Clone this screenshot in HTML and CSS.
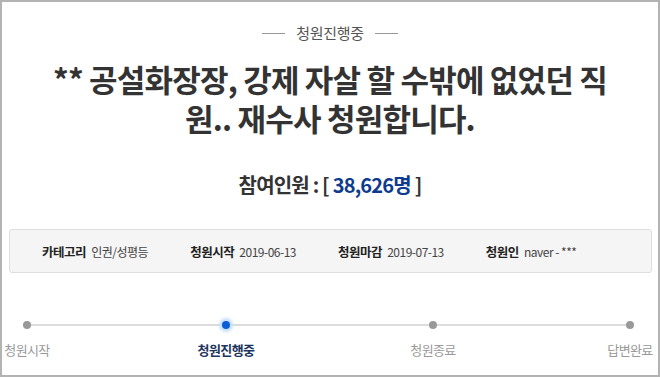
FILE: index.html
```html
<!DOCTYPE html>
<html>
<head>
  <title>청원진행중</title>
  <link rel="stylesheet" href="styles.css">
</head>
<body>
  <div class="frame">
    <div class="status">청원진행중</div>

    <h1 class="title">** 공설화장장, 강제 자살 할 수밖에 없었던 직원.. 재수사 청원합니다.</h1>

    <div class="count">참여인원 : [ <span class="count-num">38,626명</span> ]</div>

    <ul class="info">
      <li><strong>카테고리</strong> <span>인권/성평등</span></li>
      <li><strong>청원시작</strong> <span>2019-06-13</span></li>
      <li><strong>청원마감</strong> <span>2019-07-13</span></li>
      <li><strong>청원인</strong> <span>naver - ***</span></li>
    </ul>

    <div class="steps">
      <div class="step">
        <span class="dot"></span>
        <span class="step-label">청원시작</span>
      </div>
      <div class="step active">
        <span class="dot"></span>
        <span class="step-label">청원진행중</span>
      </div>
      <div class="step">
        <span class="dot"></span>
        <span class="step-label">청원종료</span>
      </div>
      <div class="step">
        <span class="dot"></span>
        <span class="step-label">답변완료</span>
      </div>
    </div>
  </div>
</body>
</html>
```

FILE: styles.css
```css
body {
  margin: 0;
  background: #fff;
  font-family: "Noto Sans CJK KR", "Noto Sans", sans-serif;
  color: #333;
}

.frame {
  width: 660px;
  height: 377px;
  box-sizing: border-box;
  border: 2px solid #b3b3b3;
  overflow: hidden;
}

/* top status with lines on both sides */
.status {
  display: flex;
  justify-content: center;
  align-items: center;
  gap: 11px;
  margin-top: 21px;
  font-size: 15px;
  line-height: 20px;
  color: #555;
  letter-spacing: -0.3px;
}

.status::before,
.status::after {
  content: "";
  width: 23px;
  height: 1px;
  background: #999;
}

.title {
  margin: 16px auto 0;
  width: 572px;
  text-align: center;
  font-size: 31px;
  line-height: 39px;
  font-weight: 700;
  color: #333;
  letter-spacing: -0.8px;
  word-break: break-all;
}

.count {
  margin-top: 35px;
  text-align: center;
  font-size: 20px;
  line-height: 26px;
  font-weight: 700;
  color: #333;
  letter-spacing: -0.8px;
}

.count-num {
  color: #0d3b8e;
}

.info {
  list-style: none;
  margin: 31px 6px 0 7px;
  padding: 0 0 0 32px;
  height: 42px;
  display: flex;
  align-items: center;
  background: #f5f5f5;
  border: 1px solid #dedede;
  border-radius: 3px;
  font-size: 12px;
  letter-spacing: -0.5px;
}

.info li {
  margin-right: 42px;
}

.info strong {
  font-weight: 700;
  font-size: 12.5px;
  color: #222;
  margin-right: 3px;
}

.info span {
  color: #444;
}

/* progress steps */
.steps {
  position: relative;
  display: flex;
  margin: 47px 0 0 1px;
}

.steps::before {
  content: "";
  position: absolute;
  left: 26px;
  right: 27px;
  top: 4px;
  height: 2px;
  background: #dcdcdc;
}

.step {
  position: relative;
  width: 48px;
  display: flex;
  flex-direction: column;
  align-items: center;
}

.step + .step {
  margin-left: 151px;
}

.step:nth-child(3) {
  margin-left: 159px;
}

.step:last-child {
  margin-left: 149px;
}

.dot {
  width: 8px;
  height: 8px;
  margin-top: 1px;
  border-radius: 50%;
  background: #999;
}

.step-label {
  margin-top: 12px;
  font-size: 13px;
  line-height: 18px;
  white-space: nowrap;
  color: #999;
  letter-spacing: -0.6px;
}

.step.active .dot {
  background: #0b5ed7;
  box-shadow: 0 0 3px 3px #c7e0fb;
}

.step.active .step-label {
  font-weight: 700;
  color: #1c355e;
}
```
